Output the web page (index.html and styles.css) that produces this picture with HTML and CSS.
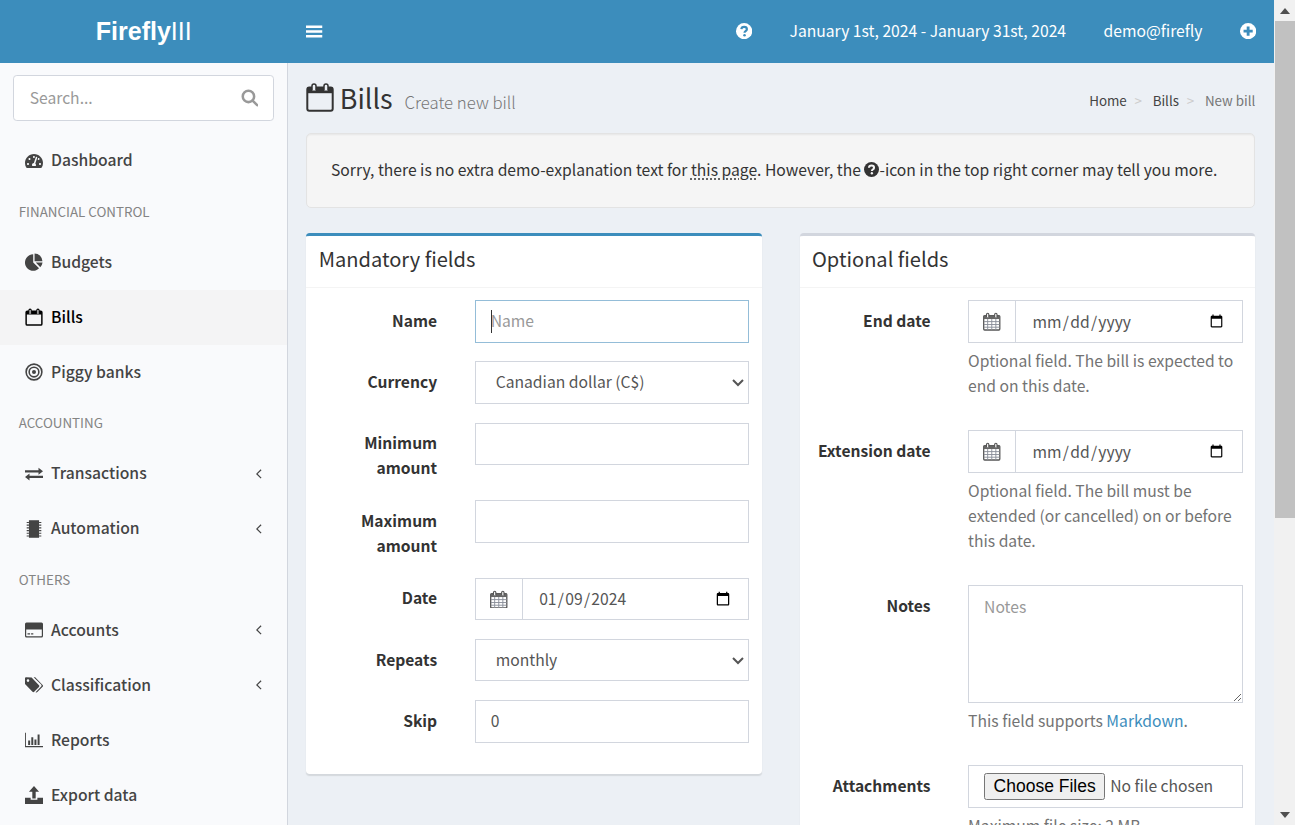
FILE: index.html
```html
<!DOCTYPE html>
<html lang="en">
<head>
<meta charset="utf-8">
<title>Bills - Create new bill</title>
<link rel="stylesheet" href="styles.css">
</head>
<body>
<div class="app">
  <header class="topbar">
    <a class="logo"><b>Firefly</b>III</a>
    <nav class="navbar">
      <a class="toggle"><svg class="ico-bars" viewBox="0 0 16 14"><path d="M0 1.200h16v2.400H0zM0 5.800h16v2.400H0zM0 10.400h16v2.400H0z"/></svg></a>
      <div class="nav-right">
        <a class="nav-item"><svg class="ico-round" viewBox="0 0 16 16"><circle cx="8" cy="8" r="8"/><path class="cut" d="M5.300 6.100C5.400 4.600 6.600 3.800 8 3.800c1.500 0 2.700 .9 2.700 2.300 0 1.900-2.300 1.900-2.300 3.400"/><circle class="dot" cx="8.400" cy="12" r="1.250"/></svg></a>
        <a class="nav-item nav-text">January 1st, 2024 - January 31st, 2024</a>
        <a class="nav-item nav-text">demo@firefly</a>
        <a class="nav-item"><svg class="ico-round" viewBox="0 0 16 16"><circle cx="8" cy="8" r="8"/><path class="dot" d="M6.600 3.500h2.800v3.100h3.100v2.800H9.400v3.100H6.600V9.400H3.500V6.600h3.100z"/></svg></a>
      </div>
    </nav>
  </header>
  <div class="main">
    <aside class="sidebar">
      <form class="search">
        <input class="search-input" type="text" placeholder="Search...">
        <svg class="ico-search" viewBox="0 0 16 16"><circle cx="6.800" cy="6.800" r="5.200"/><path d="M10.600 10.600l4.200 4.200"/></svg>
      </form>
      <ul class="menu">
        <li><a class="row"><svg class="nav-ico" viewBox="0 0 576 512"><path d="M288 32C128.940 32 0 160.940 0 320c0 52.800 14.250 102.260 39.060 144.800 5.610 9.620 16.300 15.200 27.440 15.200h443c11.140 0 21.830-5.580 27.440-15.200C561.750 422.260 576 372.800 576 320c0-159.060-128.940-288-288-288zm0 64c14.710 0 26.580 10.130 30.320 23.650-1.110 2.260-2.640 4.230-3.450 6.670l-9.220 27.670c-5.130 3.490-10.970 6.010-17.640 6.010-17.670 0-32-14.330-32-32S270.330 96 288 96zM96 384c-17.670 0-32-14.330-32-32s14.330-32 32-32 32 14.330 32 32-14.330 32-32 32zm48-160c-17.670 0-32-14.330-32-32s14.330-32 32-32 32 14.330 32 32-14.330 32-32 32zm246.770-72.410l-61.330 184C343.130 347.330 352 364.540 352 384c0 11.720-3.380 22.550-8.880 32H232.880c-5.500-9.450-8.880-20.280-8.880-32 0-33.940 26.500-61.430 59.900-63.590l61.340-184.010c4.170-12.560 17.730-19.450 30.360-15.170 12.570 4.190 19.350 17.790 15.170 30.360zm14.660 57.200l15.520-46.550c3.470-1.290 7.130-2.230 11.050-2.230 17.670 0 32 14.330 32 32s-14.330 32-32 32c-11.380-.01-20.890-6.280-26.570-15.220zM480 384c-17.670 0-32-14.330-32-32s14.330-32 32-32 32 14.330 32 32-14.330 32-32 32z"/></svg><span>Dashboard</span></a></li>
        <li class="head">FINANCIAL CONTROL</li>
        <li><a class="row"><svg class="nav-ico" viewBox="0 0 16 16"><path d="M7.300 1.200A7.300 7.300 0 1 0 12.500 13.600L7.300 8.500z"/><path d="M8.500 .4A7 7 0 0 1 15.500 7.300H8.500z"/><path d="M9.600 8.500h6a7.300 7.300 0 0 1-2 4.100z"/></svg><span>Budgets</span></a></li>
        <li class="active"><a class="row"><svg class="nav-ico cal-o" viewBox="0 0 16 16"><rect x="1" y="2.800" width="14" height="12.400" rx="1"/><path class="band" d="M1 2.800h14v3H1z"/><path class="pin" d="M3.500 5V2a1 1 0 0 1 2 0v3M10.500 5V2a1 1 0 0 1 2 0v3"/></svg><span>Bills</span></a></li>
        <li><a class="row"><svg class="nav-ico ring" viewBox="0 0 16 16"><circle cx="8" cy="8" r="7"/><circle cx="8" cy="8" r="4.300"/><circle class="core" cx="8" cy="8" r="1.800"/></svg><span>Piggy banks</span></a></li>
        <li class="head">ACCOUNTING</li>
        <li><a class="row has-sub"><svg class="nav-ico" viewBox="0 0 18 16"><path d="M0 4.200h13.500V1.800L18 5.300l-4.500 3.500V6.400H0zM18 9.800H4.500V7.400L0 10.900l4.500 3.500V12H18z"/></svg><span>Transactions</span><svg class="chev" viewBox="0 0 8 12"><path d="M6.500 1.500L2 6l4.500 4.500"/></svg></a></li>
        <li><a class="row has-sub"><svg class="nav-ico" viewBox="0 0 16 16"><path d="M3.500 .2h9v15.600h-9z"/><path class="ticks" d="M1.500 2.200h2M1.500 4.600h2M1.500 7h2M1.500 9.400h2M1.500 11.800h2M1.500 14.200h2M12.500 2.200h2M12.500 4.600h2M12.500 7h2M12.500 9.400h2M12.500 11.800h2M12.500 14.200h2"/></svg><span>Automation</span><svg class="chev" viewBox="0 0 8 12"><path d="M6.500 1.500L2 6l4.500 4.500"/></svg></a></li>
        <li class="head">OTHERS</li>
        <li><a class="row has-sub"><svg class="nav-ico" viewBox="0 0 18 16"><path fill-rule="evenodd" d="M1.500 .5h15A1.500 1.500 0 0 1 18 2v12a1.500 1.500 0 0 1-1.500 1.500h-15A1.500 1.500 0 0 1 0 14V2A1.500 1.500 0 0 1 1.500 .5zM1.200 7.500v6.300c0 .3.200.5.500.5h14.600c.3 0 .5-.2.500-.5V7.500zM2.500 11.300h2.600v1.200H2.500zM6.100 11.300h2.200v1.200H6.100z"/></svg><span>Accounts</span><svg class="chev" viewBox="0 0 8 12"><path d="M6.500 1.500L2 6l4.500 4.500"/></svg></a></li>
        <li><a class="row has-sub"><svg class="nav-ico" viewBox="0 0 18 16"><path fill-rule="evenodd" d="M0 1v6l7.500 7.800a1.200 1.200 0 0 0 1.700 0l4.800-4.900a1.200 1.200 0 0 0 0-1.700L6.600 .6 1 .2A1 1 0 0 0 0 1zM3 2.300a1.300 1.300 0 1 1 0 2.600 1.300 1.300 0 0 1 0-2.600z"/><path d="M8.600 .3l1.600 0 7.400 7.700a1.300 1.300 0 0 1 0 1.800l-5.200 5.300a1.300 1.300 0 0 1-1.800 .1l5.300-5.400a1.800 1.800 0 0 0 0-2.600z"/></svg><span>Classification</span><svg class="chev" viewBox="0 0 8 12"><path d="M6.500 1.500L2 6l4.500 4.500"/></svg></a></li>
        <li><a class="row"><svg class="nav-ico" viewBox="0 0 20 16"><path d="M0 0h1v14.800h19V16H0zM3.500 8.500h2.200v5H3.500zM7 5h2.200v8.500H7zM10.500 7.500h2.200v6h-2.200zM14 2h2.200v11.500H14z"/></svg><span>Reports</span></a></li>
        <li><a class="row"><svg class="nav-ico" viewBox="0 0 16 16"><path d="M8 0l4.500 5H9.500v6h-3V5h-3zM0 10.500h5v1.700h6v-1.700h5V16H0z"/></svg><span>Export data</span></a></li>
      </ul>
    </aside>
    <main class="content">
      <div class="page-head">
        <h1 class="title"><svg class="title-ico" viewBox="0 0 28 29"><rect x="1.300" y="4.500" width="25.400" height="23.200" rx="2"/><path class="band" d="M1.300 4.500h25.400v5.700H1.300z"/><path class="pin" d="M6 7.500V3a2 2 0 0 1 4 0v4.500M18 7.500V3a2 2 0 0 1 4 0v4.500"/></svg>Bills <small>Create new bill</small></h1>
        <ol class="crumbs"><li><a>Home</a></li><li><a>Bills</a></li><li class="current">New bill</li></ol>
      </div>
      <section class="page-body">
        <div class="well">Sorry, there is no extra demo-explanation text for <abbr>this page</abbr>. However, the <svg class="well-q" viewBox="0 0 16 16"><circle cx="8" cy="8" r="8"/><path class="cut" d="M5.300 6.100C5.400 4.600 6.600 3.800 8 3.800c1.500 0 2.700 .9 2.700 2.300 0 1.900-2.300 1.900-2.300 3.400"/><circle class="dot" cx="8.400" cy="12" r="1.250"/></svg>-icon in the top right corner may tell you more.</div>
        <div class="columns">
          <form class="box box-primary">
            <h3 class="box-title">Mandatory fields</h3>
            <div class="box-body">
              <div class="field"><label class="lbl">Name</label><div class="caret-wrap"><input class="ctl focused" type="text" placeholder="Name"><span class="caret"></span></div></div>
              <div class="field"><label class="lbl">Currency</label><div><select class="ctl"><option>Canadian dollar (C$)</option></select></div></div>
              <div class="field"><label class="lbl">Minimum amount</label><div><input class="ctl" type="text"></div></div>
              <div class="field"><label class="lbl">Maximum amount</label><div><input class="ctl" type="text"></div></div>
              <div class="field"><label class="lbl">Date</label><div class="group"><span class="addon"><svg class="cal-grid" viewBox="0 0 15 16"><rect class="frame" x=".6" y="3" width="13.800" height="12.400" rx=".8"/><path class="band" d="M.6 3h13.800v3H.6z"/><path class="grid" d="M.8 8.200h13.400M.8 10.700h13.400M.8 13h13.400M4 6v9.500M7.500 6v9.500M11 6v9.500"/><path class="pin" d="M3 4.500V2a1 1 0 0 1 2 0v2.500M10 4.500V2a1 1 0 0 1 2 0v2.500"/></svg></span><input class="ctl date" type="date" value="2024-01-09"></div></div>
              <div class="field"><label class="lbl">Repeats</label><div><select class="ctl"><option>monthly</option></select></div></div>
              <div class="field"><label class="lbl">Skip</label><div><input class="ctl" type="text" value="0"></div></div>
            </div>
          </form>
          <form class="box box-plain">
            <h3 class="box-title">Optional fields</h3>
            <div class="box-body">
              <div class="field"><label class="lbl">End date</label><div><div class="group"><span class="addon"><svg class="cal-grid" viewBox="0 0 15 16"><rect class="frame" x=".6" y="3" width="13.800" height="12.400" rx=".8"/><path class="band" d="M.6 3h13.800v3H.6z"/><path class="grid" d="M.8 8.200h13.400M.8 10.700h13.400M.8 13h13.400M4 6v9.500M7.500 6v9.500M11 6v9.500"/><path class="pin" d="M3 4.500V2a1 1 0 0 1 2 0v2.500M10 4.500V2a1 1 0 0 1 2 0v2.500"/></svg></span><input class="ctl date" type="date"></div><p class="help">Optional field. The bill is expected to end on this date.</p></div></div>
              <div class="field"><label class="lbl">Extension date</label><div><div class="group"><span class="addon"><svg class="cal-grid" viewBox="0 0 15 16"><rect class="frame" x=".6" y="3" width="13.800" height="12.400" rx=".8"/><path class="band" d="M.6 3h13.800v3H.6z"/><path class="grid" d="M.8 8.200h13.400M.8 10.700h13.400M.8 13h13.400M4 6v9.500M7.500 6v9.500M11 6v9.500"/><path class="pin" d="M3 4.500V2a1 1 0 0 1 2 0v2.500M10 4.500V2a1 1 0 0 1 2 0v2.500"/></svg></span><input class="ctl date" type="date"></div><p class="help">Optional field. The bill must be extended (or cancelled) on or before this date.</p></div></div>
              <div class="field"><label class="lbl">Notes</label><div><textarea class="ctl area" rows="4" placeholder="Notes"></textarea><p class="help">This field supports <a class="link">Markdown</a>.</p></div></div>
              <div class="field"><label class="lbl">Attachments</label><div><input class="ctl file" type="file" multiple><p class="help">Maximum file size: 2 MB</p></div></div>
            </div>
          </form>
        </div>
      </section>
    </main>
  </div>
</div>
<div class="scrollbar">
  <div class="sb-btn"><span class="arrow-up"></span></div>
  <div class="sb-thumb"></div>
  <div class="sb-rest"></div>
  <div class="sb-btn"><span class="arrow-down"></span></div>
</div>
</body>
</html>
```
FILE: styles.css
```css
* { box-sizing: border-box; }
html, body { margin: 0; height: 100%; overflow: hidden; }
body { display: flex; background: #ecf0f5; }
.app {
  zoom: 1.25;
  flex: 1;
  min-width: 0;
  overflow: hidden;
  font-family: "Noto Sans CJK SC", "Noto Sans", sans-serif;
  font-size: 12.550px;
  line-height: 20px;
  color: #333;
}
a { color: inherit; text-decoration: none; }

.topbar { display: flex; height: 50px; background: #3c8dbc; color: #fff; }
.logo { width: 230px; flex: none; text-align: center; font: 300 20px/50px "Liberation Sans", sans-serif; }
.logo b { font-weight: 700; }
.navbar { flex: 1; display: flex; justify-content: space-between; align-items: center; }
.toggle { display: flex; padding: 0 15px; }
.ico-bars { width: 13px; height: 12px; fill: #fff; }
.nav-right { display: flex; align-items: center; margin-right: -.8px; }
.nav-item { display: flex; padding: 0 15px; }
.nav-text { padding-bottom: 1.400px; }
.ico-round { width: 13px; height: 13px; fill: #fff; }
.ico-round .cut { fill: none; stroke: #3c8dbc; stroke-width: 2.200; }
.ico-round .dot { fill: #3c8dbc; }

.main { display: flex; min-height: 900px; }
.sidebar { width: 230px; flex: none; background: #f9fafc; border-right: 1px solid #d2d6de; }
.search { display: flex; align-items: center; margin: 10px 10px 10px 10.400px; height: 36.860px; width: 209px; background: #fff; border: 1px solid #d2d6de; border-radius: 3px; padding-right: 12px; }
.search-input { flex: 1; min-width: 0; border: 0; outline: 0; background: transparent; padding: 0 12.500px 1.400px; font: inherit; color: #555; }
.search-input::placeholder { color: #999; }
.ico-search { width: 14px; height: 14px; fill: none; stroke: #999; stroke-width: 2.300; stroke-linecap: round; }
.menu { list-style: none; margin: 0; padding: 0; }
.row { display: flex; align-items: center; height: 44px; padding-left: 20px; gap: 6.400px; font-weight: 500; color: #444; }
.row span { padding-bottom: 1.800px; }
.active .row { background: #f4f4f5; color: #000; }
.head { padding: 10px 25px 10px 15px; font-size: 10.700px; line-height: 17.140px; color: #848484; }
.nav-ico { width: 14.400px; height: 14.400px; flex: none; fill: #444; }
.cal-o { stroke: #000; stroke-width: 1.300; fill: none; }
.cal-o .band { fill: #000; stroke: none; }
.cal-o .pin { fill: #f4f4f5; stroke-width: 1; }
.ring { fill: none; stroke: #444; stroke-width: 1.400; }
.ring .core { fill: #444; stroke: none; }
.ticks { fill: none; stroke: #444; stroke-width: 1; }
.chev { width: 6px; height: 9.500px; margin-left: auto; margin-right: 19.500px; fill: none; stroke: #444; stroke-width: 1.300; }

.content { flex: 1; min-width: 0; }
.page-head { display: flex; justify-content: space-between; padding: 15px 15px 0; height: 41.400px; }
.title { margin: 0; font-size: 21.500px; font-weight: 400; line-height: 26.400px; display: flex; align-items: baseline; white-space: pre; }
.title small { font-size: 13.400px; font-weight: 300; color: #777; padding-left: 4.600px; }
.title-ico { width: 22.400px; height: 23.200px; margin-right: 4.400px; align-self: center; fill: none; stroke: #333; stroke-width: 2; }
.title-ico .band { fill: #333; stroke: none; }
.title-ico .pin { fill: #ecf0f5; stroke-width: 1.500; }
.crumbs { display: flex; list-style: none; margin: 7.200px 0 0; padding: 0; font-size: 10.700px; line-height: 17px; color: #444; }
.crumbs li + li::before { content: ">\00a0"; padding: 0 6.200px; color: #ccc; }
.crumbs .current { color: #777; }

.page-body { padding: 15px; }
.well { height: 60px; margin-bottom: 20px; padding: 18.200px 19px 19px; background: #f5f5f5; border: 1px solid #e3e3e3; border-radius: 4px; box-shadow: inset 0 1px 1px rgba(0,0,0,.05); }
abbr { text-decoration: underline dotted #333; text-underline-offset: 2px; }
.well-q { display: inline-block; width: 12px; height: 12px; vertical-align: -1px; fill: #333; }
.well-q .cut { fill: none; stroke: #f5f5f5; stroke-width: 2.200; }
.well-q .dot { fill: #f5f5f5; }

.columns { display: grid; grid-template-columns: 1fr 1fr; gap: 30px; align-items: start; }
.box { display: block; background: #fff; border-top: 3px solid #d2d6de; border-radius: 3px; box-shadow: 0 1px 1px rgba(0,0,0,.1); }
.box-primary { border-top-color: #3c8dbc; }
.box-title { margin: 0; padding: 8.400px 10px 0; font-size: 16.050px; font-weight: 400; line-height: 19.800px; height: 41.200px; border-bottom: 1px solid #f4f4f4; }
.box-body { padding: 10.100px 10px 9.700px; }
.box-primary .box-body { padding-right: 10.400px; }
.field { display: grid; grid-template-columns: calc((100% + 30px) / 3 - 30px) 1fr; column-gap: 30px; margin-bottom: 15px; }
.lbl { padding: 6.200px 0 .8px; text-align: right; font-weight: 700; font-size: 12.500px; }
.ctl { display: block; width: 100%; height: 34px; padding: 5.300px 12px 6.700px; border: 1px solid #d2d6de; border-radius: 0; background: #fff; color: #555; font: inherit; outline: 0; }
.ctl::placeholder { color: #999; }
.date { padding: 6px 12px; }
.focused { border-color: #94bdd8; }
.caret-wrap { position: relative; }
.caret { position: absolute; left: 13px; top: 8px; width: 1px; height: 18px; background: #333; }
.area { height: 94px; resize: vertical; padding: 6px 12px; }
.file { padding: 5.200px 12px 6.800px; }
.file::file-selector-button { font: 14px "Liberation Sans", sans-serif; }
.group { display: flex; }
.addon { flex: none; display: flex; align-items: center; justify-content: center; width: 37.800px; height: 34px; border: 1px solid #d2d6de; border-right: 0; background: #fff; }
.group .ctl { flex: 1; min-width: 0; }
.cal-grid { width: 14px; height: 15px; fill: none; stroke: #555; stroke-width: 1.100; }
.cal-grid .band { fill: #666; stroke: none; }
.cal-grid .grid { stroke: #8a8f9a; stroke-width: .8; }
.cal-grid .pin { fill: #fff; stroke: #555; stroke-width: 1; }
.help { margin: 4.200px 0 10.800px; color: #737373; }
.link { color: #3c8dbc; }

.scrollbar { flex: none; width: 21px; display: flex; flex-direction: column; background: #f1f1f1; }
.sb-btn { flex: none; height: 21px; display: flex; align-items: center; justify-content: center; }
.arrow-up { border: 5px solid transparent; border-top: 0; border-bottom: 6px solid #505050; }
.arrow-down { border: 5px solid transparent; border-bottom: 0; border-top: 6px solid #505050; }
.sb-thumb { flex: none; height: 497px; margin-left: 1px; background: #c1c1c1; }
.sb-rest { flex: 1; }
```
